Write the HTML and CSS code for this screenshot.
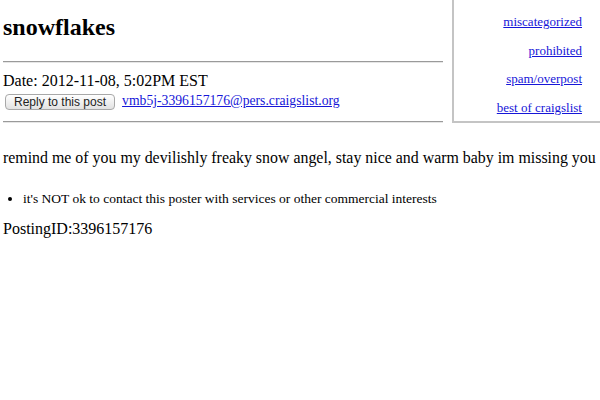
FILE: index.html
```html
<!DOCTYPE html>
<html lang="en">
<head>
<meta charset="utf-8">
<title>snowflakes</title>
<link rel="stylesheet" href="styles.css">
</head>
<body>
<div class="page">
  <div class="top">
    <div class="main">
      <h2 class="title">snowflakes</h2>
      <hr class="rule">
      <div class="date">Date: 2012-11-08, 5:02PM EST</div>
      <div class="reply-row">
        <button class="reply-btn" type="button">Reply to this post</button>
        <a class="email" href="#">vmb5j-3396157176@pers.craigslist.org</a>
      </div>
      <hr class="rule rule-bottom">
    </div>
    <aside class="flags">
      <a href="#">miscategorized</a>
      <a href="#">prohibited</a>
      <a href="#">spam/overpost</a>
      <a href="#">best of craigslist</a>
    </aside>
  </div>
  <p class="body-text">remind me of you my devilishly freaky snow angel, stay nice and warm baby im missing you</p>
  <ul class="notes">
    <li>it's NOT ok to contact this poster with services or other commercial interests</li>
  </ul>
  <p class="posting-id">PostingID:3396157176</p>
</div>
</body>
</html>
```
FILE: styles.css
```css
html, body {
  margin: 0;
  padding: 0;
  background: #ffffff;
}

body {
  font-family: "Liberation Serif", "Times New Roman", serif;
  color: #000000;
  overflow: hidden;
}

.page {
  padding-left: 3px;
}

a {
  color: #1616d8;
  text-decoration: underline;
}

.top {
  display: flex;
  align-items: stretch;
}

.main {
  width: 440px;
  margin-right: 9px;
  flex: none;
}

.title {
  margin: 13px 0 0;
  font-size: 24px;
  line-height: 28px;
  font-weight: bold;
}

.rule {
  height: 0;
  margin: 20px 0 0;
  border: 0;
  border-top: 1px solid #9a9a9a;
  border-bottom: 1px solid #e6e6e6;
}

.rule-bottom {
  margin-top: 11px;
}

.date {
  margin-top: 9px;
  font-size: 16px;
  line-height: 18px;
}

.reply-row {
  display: flex;
  align-items: flex-start;
  gap: 7px;
  margin-top: 3px;
}

.reply-btn {
  margin: 1px 0 0 2px;
  height: 16px;
  padding: 0 8px;
  font-family: "Liberation Sans", Arial, sans-serif;
  font-size: 12px;
  line-height: 14px;
  color: #222222;
  background: linear-gradient(#ffffff, #e2e2e2);
  border: 1px solid #a8a8a8;
  border-radius: 4px;
}

.email {
  font-size: 13.7px;
  line-height: 15px;
}

.flags {
  flex: 1;
  display: flex;
  flex-direction: column;
  align-items: flex-end;
  gap: 13.5px;
  padding: 14px 18px 0 0;
  border-left: 2px solid #c4c4c4;
  border-bottom: 2px solid #c4c4c4;
  font-size: 13px;
  line-height: 15px;
}

.body-text {
  margin: 26px 0 0;
  font-size: 15.9px;
  line-height: 18px;
}

.notes {
  margin: 24px 0 0;
  padding-left: 20px;
  font-size: 13.5px;
  line-height: 15px;
}

.posting-id {
  margin: 14px 0 0;
  font-size: 16px;
  line-height: 18px;
}
```
